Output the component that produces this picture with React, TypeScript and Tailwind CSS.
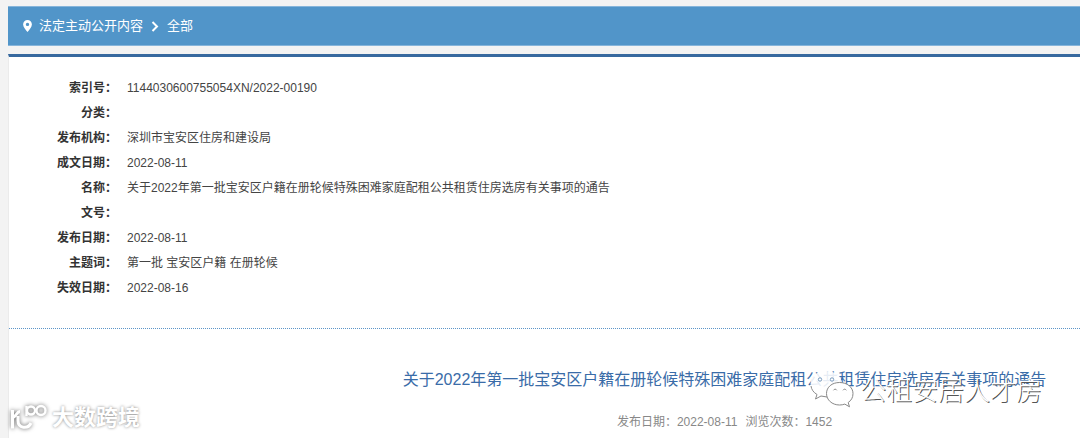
const details = [
  { label: '索引号：', value: '1144030600755054XN/2022-00190' },
  { label: '分类：', value: '' },
  { label: '发布机构：', value: '深圳市宝安区住房和建设局' },
  { label: '成文日期：', value: '2022-08-11' },
  { label: '名称：', value: '关于2022年第一批宝安区户籍在册轮候特殊困难家庭配租公共租赁住房选房有关事项的通告' },
  { label: '文号：', value: '' },
  { label: '发布日期：', value: '2022-08-11' },
  { label: '主题词：', value: '第一批 宝安区户籍 在册轮候' },
  { label: '失效日期：', value: '2022-08-16' },
];

function Breadcrumb() {
  return (
    <nav className="flex h-10 items-center border-y border-[#86b5db] bg-[#5195c9] pl-[15px] text-[13px] text-white">
      <svg className="h-3 w-[9px]" viewBox="0 0 9 12" aria-hidden="true">
        <path
          fill="#fff"
          fillRule="evenodd"
          d="M4.5 0A4.4 4.4 0 0 0 .1 4.4C.1 7.2 3 10 4.5 12 6 10 8.900 7.200 8.900 4.400A4.400 4.400 0 0 0 4.500 0Zm0 2.700a1.700 1.700 0 1 1 0 3.400 1.700 1.700 0 0 1 0-3.400Z"
        />
      </svg>
      <a href="#open" className="ml-[7px]">法定主动公开内容</a>
      <svg className="mx-2 h-[11px] w-2" viewBox="0 0 8 11" fill="none" stroke="#fff" strokeWidth="2" aria-hidden="true">
        <path d="M1.500 1 6 5.500 1.500 10" />
      </svg>
      <a href="#all">全部</a>
    </nav>
  );
}

function AccountMark() {
  return (
    <div className="pointer-events-none absolute top-[371px] left-[810px] flex items-center">
      <svg className="h-10 w-[46px]" viewBox="0 0 46 40" aria-hidden="true">
        <path d="M16 0C7 0 .5 5.300 .5 13c0 4.500 2 8.200 6.500 10.500L5.500 28l5.500-3c2 .7 4 1 6 1 9 0 15-5 15-13S25 0 16 0Z" fill="#fff" fillOpacity=".88" />
        <path d="M1 15c.5 3.500 2.300 6.300 6 8.500L5.500 28l5.500-3 6 1" fill="none" stroke="#8a8a8a" />
        <circle cx="10" cy="8.500" r="1.700" fill="#fff" stroke="#789abd" />
        <circle cx="22" cy="8.500" r="1.700" fill="#fff" stroke="#789abd" />
        <path d="M29.500 11.500c-7.500 0-13 4.600-13 11S22 34 29.500 34c2 0 3.700-.3 5.300-.9l4.700 2.700-1.300-4.300c3-2 4.800-4.800 4.800-9C43 16.100 37 11.500 29.500 11.500Z" fill="#fff" stroke="#888" />
        <path d="M23.500 19.300c.7-1.500 2.600-1.500 3.300 0m6.200 0c.7-1.500 2.600-1.500 3.300 0" fill="none" stroke="#888" />
      </svg>
      <span className="ml-1 text-[26px] leading-10 font-light whitespace-nowrap text-white [text-shadow:1px_1px_0_#555]">
        公租安居人才房
      </span>
    </div>
  );
}

function SiteMark() {
  return (
    <div className="pointer-events-none absolute top-[402px] left-[8px] flex items-center">
      <svg className="h-8 w-10 overflow-visible drop-shadow-[0_0_2px_#666]" viewBox="0 0 40 32" fill="none" stroke="#fff" aria-hidden="true">
        <path strokeWidth="3" d="M4.500 8v18.500M12 9.500C8.500 9.500 8.500 15 4.500 15.500M10 14v4.500c0 8 10 9 13 2.500" />
        <path strokeWidth="2.400" d="M18.500 4v10" />
        <circle cx="23" cy="8.500" r="4" strokeWidth="2.400" />
        <circle cx="33" cy="8.500" r="4.500" strokeWidth="2.400" />
      </svg>
      <span className="ml-1 text-[22px] leading-8 font-bold whitespace-nowrap text-white [text-shadow:0_0_3px_#888]">
        大数跨境
      </span>
    </div>
  );
}

export default function App() {
  return (
    <div className="relative flex min-h-screen flex-col overflow-hidden bg-[#f3f3f3] pt-[6px] pl-2 font-['Liberation_Sans','Noto_Sans_CJK_SC',sans-serif]">
      <Breadcrumb />
      <main className="mt-2 grow border-t-3 border-l border-t-[#37699f] border-l-[#ebebeb] bg-white">
        <dl className="border-b border-dotted border-b-[#5c95c8] pt-[19px] pb-[27px] text-[12px] leading-[25px] text-[#444]">
          {details.map((item) => (
            <div key={item.label} className="flex h-[25px] gap-[10px]">
              <dt className="w-[108px] shrink-0 text-right font-bold text-[#333]">{item.label}</dt>
              <dd className="whitespace-nowrap">{item.value}</dd>
            </div>
          ))}
        </dl>
        <article className="pt-[39px] pl-[360px] text-center whitespace-nowrap">
          <h1 className="text-[16px] leading-6 text-[#3a6ca8]">
            关于2022年第一批宝安区户籍在册轮候特殊困难家庭配租公共租赁住房选房有关事项的通告
          </h1>
          <p className="mt-5 flex justify-center gap-2 text-[12px] leading-5 text-[#888]">
            <span>发布日期：2022-08-11</span>
            <span>浏览次数：1452</span>
          </p>
        </article>
      </main>
      <AccountMark />
      <SiteMark />
    </div>
  );
}
